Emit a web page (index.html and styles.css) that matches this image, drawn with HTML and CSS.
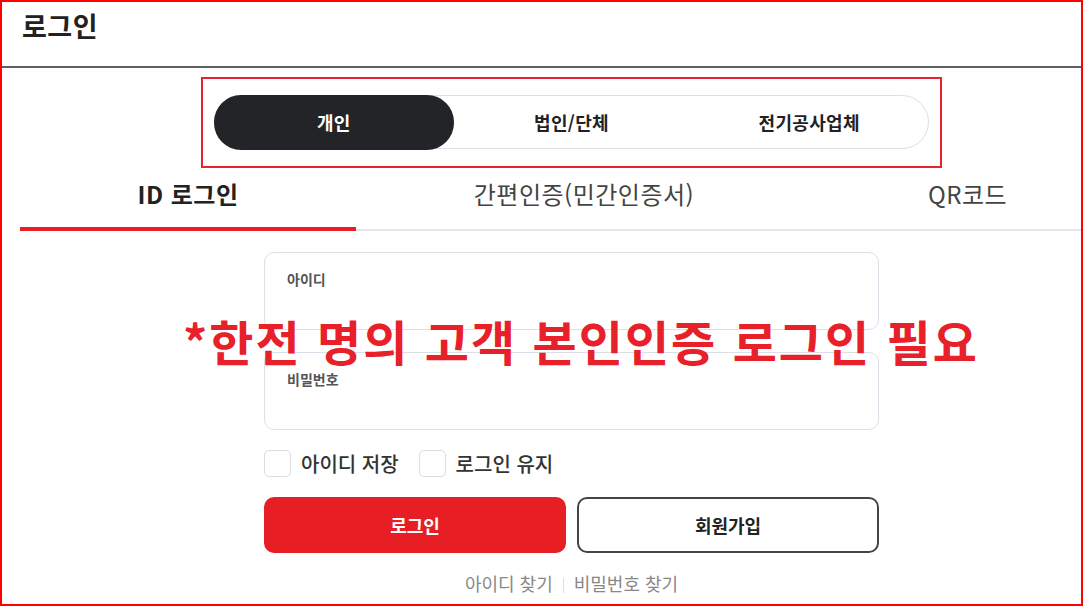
FILE: index.html
```html
<!DOCTYPE html>
<html lang="ko">
<head>
  <meta charset="UTF-8">
  <meta name="viewport" content="width=device-width, initial-scale=1.0">
  <title>로그인</title>
  <link rel="stylesheet" href="styles.css">
</head>
<body>
  <div class="frame">
    <div class="page">
      <header class="topbar">
        <h1>로그인</h1>
      </header>

      <!-- 회원 유형 선택 -->
      <div class="member-type">
        <div class="segment">
          <button class="seg active">개인</button>
          <button class="seg">법인/단체</button>
          <button class="seg">전기공사업체</button>
        </div>
      </div>

      <!-- 로그인 방식 탭 -->
      <div class="tabs">
        <div class="tab active">ID 로그인</div>
        <div class="tab">간편인증(민간인증서)</div>
        <div class="tab">QR코드</div>
      </div>

      <form class="login-form">
        <div class="field">
          <label for="user-id">아이디</label>
          <input id="user-id" type="text">
        </div>
        <div class="field">
          <label for="user-pw">비밀번호</label>
          <input id="user-pw" type="password">
        </div>

        <div class="checks">
          <label class="check"><span class="box"></span>아이디 저장</label>
          <label class="check"><span class="box"></span>로그인 유지</label>
        </div>

        <div class="actions">
          <button type="button" class="btn btn-login">로그인</button>
          <button type="button" class="btn btn-join">회원가입</button>
        </div>

        <div class="links">
          <a href="#">아이디 찾기</a><span class="divider"></span><a href="#">비밀번호 찾기</a>
        </div>
      </form>
    </div>

    <p class="notice">*한전 명의 고객 본인인증 로그인 필요</p>
  </div>
</body>
</html>
```

FILE: styles.css
```css
* {
  margin: 0;
  padding: 0;
  box-sizing: border-box;
}

body {
  font-family: 'Noto Sans CJK KR', 'Noto Sans', sans-serif;
  background: #fff;
  color: #222;
  overflow: hidden;
}

.frame {
  position: relative;
  width: 1083px;
  height: 606px;
  border: 2px solid #ff0000;
  overflow: hidden;
}

.page {
  width: 1139px;
}

.topbar {
  height: 66px;
  padding: 7px 0 0 20px;
  border-bottom: 2px solid #5f6064;
}

.topbar h1 {
  font-size: 27px;
  line-height: 34px;
  font-weight: 700;
  letter-spacing: 0.5px;
  color: #222;
}

.member-type {
  width: 741px;
  margin: 9px auto 0;
  padding: 16px 11px 17px;
  border: 2px solid #e8232d;
}

.segment {
  display: grid;
  grid-template-columns: repeat(3, 1fr);
  height: 54px;
  border: 1.5px solid #dce0e8;
  border-radius: 27px;
}

.seg {
  border: none;
  background: none;
  font-family: inherit;
  font-size: 18px;
  font-weight: 700;
  letter-spacing: 0.3px;
  color: #222;
  cursor: pointer;
}

.seg.active {
  margin: -1.5px;
  background: #232428;
  color: #fff;
  border-radius: 27px;
}

.tabs {
  display: grid;
  grid-template-columns: 336px 456px 1fr;
  margin: 0 18px;
}

.tab {
  height: 63px;
  padding-top: 11px;
  border-bottom: 2px solid #e4e6ec;
  font-size: 24px;
  line-height: 30px;
  letter-spacing: 0.5px;
  text-align: center;
  color: #444;
}

.tab.active {
  border-bottom: 4px solid #e81e25;
  font-weight: 700;
  color: #222;
}

.login-form {
  width: 615px;
  margin: 21px auto 0;
}

.field {
  height: 78px;
  padding: 17px 22px 0;
  border: 1.5px solid #dbe0e8;
  border-radius: 10px;
}

.field + .field {
  margin-top: 22px;
}

.field label {
  display: block;
  font-size: 14px;
  line-height: 18px;
  font-weight: 700;
  color: #555;
}

.field input {
  width: 100%;
  border: none;
  outline: none;
  font-size: 16px;
  background: none;
}

.checks {
  display: flex;
  gap: 20px;
  margin-top: 20px;
}

.check {
  display: flex;
  align-items: center;
  gap: 10px;
  height: 27px;
  font-size: 20px;
  line-height: 27px;
  font-weight: 500;
  color: #333;
}

.box {
  width: 27px;
  height: 27px;
  border: 1.5px solid #d8dde6;
  border-radius: 5px;
}

.actions {
  display: grid;
  grid-template-columns: 1fr 1fr;
  gap: 11px;
  margin-top: 20px;
}

.btn {
  height: 56px;
  border-radius: 10px;
  font-family: inherit;
  font-size: 18px;
  font-weight: 700;
  cursor: pointer;
}

.btn-login {
  border: none;
  background: #e81e25;
  color: #fff;
}

.btn-join {
  border: 2px solid #444;
  background: #fff;
  color: #222;
}

.links {
  margin-top: 18px;
  text-align: center;
  font-size: 18px;
  line-height: 24px;
}

.links a {
  color: #888;
  text-decoration: none;
}

.divider {
  display: inline-block;
  width: 1px;
  height: 15px;
  margin: 0 10px;
  background: #ddd;
  vertical-align: -2px;
}

.notice {
  position: absolute;
  left: 181px;
  top: 314px;
  font-size: 48px;
  line-height: 1;
  font-weight: 700;
  letter-spacing: 2px;
  color: #e8202a;
  white-space: nowrap;
}
```
